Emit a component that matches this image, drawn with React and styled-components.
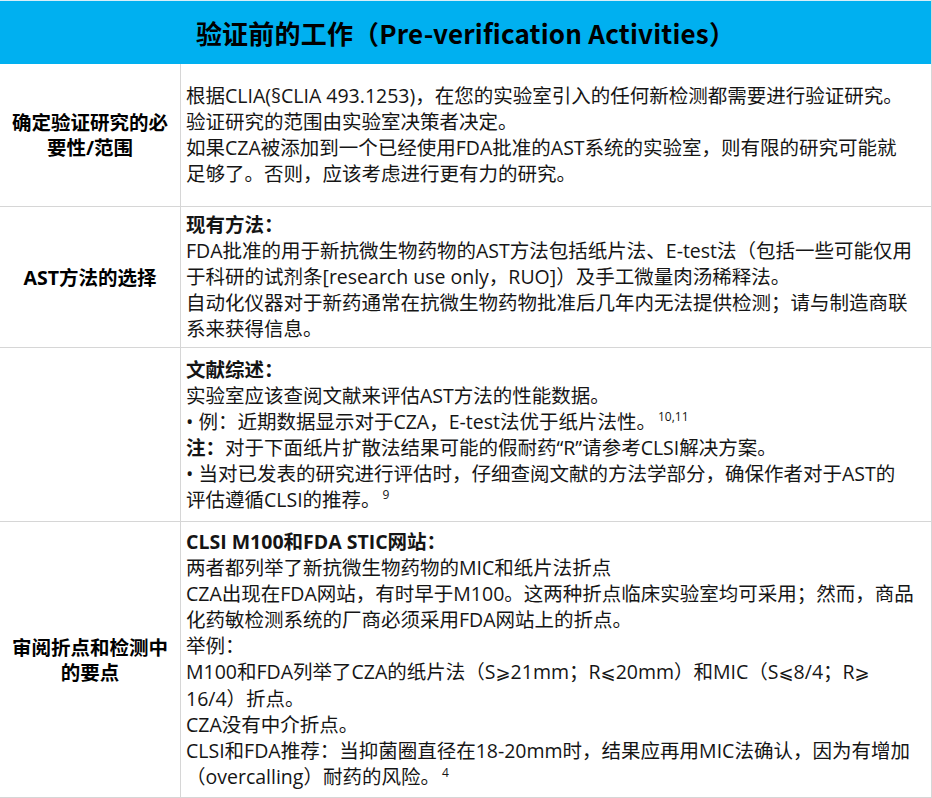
import React from 'react';
import styled, { createGlobalStyle } from 'styled-components';

const GlobalStyle = createGlobalStyle`
  html, body {
    margin: 0;
    padding: 0;
    background: #ffffff;
  }
`;

const Table = styled.main`
  width: 932px;
  box-sizing: border-box;
  border-right: 1px solid #d6d6d6;
  border-bottom: 1px solid #d6d6d6;
  font-family: 'Open Sans', 'Noto Sans CJK SC', sans-serif;
  color: #151515;
`;

const Header = styled.header`
  height: 64px;
  box-sizing: border-box;
  border-top: 1px solid #d6eef9;
  background: #00b0f0;
  display: flex;
  align-items: center;
  justify-content: center;
`;

const Title = styled.h1`
  margin: 0;
  font-family: 'Noto Sans CJK SC', sans-serif;
  font-size: 26px;
  font-weight: 700;
  color: #000;
  letter-spacing: 0.2px;
`;

const Row = styled.section`
  display: grid;
  grid-template-columns: 181px 1fr;
  height: ${(p) => p.$height}px;
  box-sizing: border-box;
  border-bottom: ${(p) => (p.$last ? 'none' : '1px solid #d6d6d6')};
`;

const Label = styled.div`
  border-right: 1px solid #d6d6d6;
  display: flex;
  align-items: center;
  justify-content: center;
  text-align: center;
  padding: 0 8px;
  font-size: 19.5px;
  line-height: 25px;
  font-weight: 700;
  color: #000;
`;

const Body = styled.div`
  display: flex;
  flex-direction: column;
  justify-content: center;
  padding: 0 0 0 5px;
  font-size: 19.5px;
  line-height: 26px;
  overflow: hidden;
`;

const Line = styled.div`
  white-space: nowrap;
  font-weight: ${(p) => (p.$bold ? 700 : 400)};
`;

const Strong = styled.b`
  font-weight: 700;
`;

const Sym = styled.span`
  font-family: 'DejaVu Sans', 'Noto Sans CJK SC', sans-serif;
  font-size: 18px;
`;

const Sup = styled.sup`
  font-size: 12px;
  line-height: 0;
  vertical-align: 0.6em;
  margin-left: 2px;
`;

export default function App() {
  return (
    <>
      <GlobalStyle />
      <Table>
        <Header>
          <Title>验证前的工作（Pre-verification Activities）</Title>
        </Header>

        <Row $height={143}>
          <Label>确定验证研究的必要性/范围</Label>
          <Body>
            <Line>根据CLIA(§CLIA 493.1253)，在您的实验室引入的任何新检测都需要进行验证研究。</Line>
            <Line>验证研究的范围由实验室决策者决定。</Line>
            <Line>如果CZA被添加到一个已经使用FDA批准的AST系统的实验室，则有限的研究可能就</Line>
            <Line>足够了。否则，应该考虑进行更有力的研究。</Line>
          </Body>
        </Row>

        <Row $height={141}>
          <Label>AST方法的选择</Label>
          <Body>
            <Line $bold>现有方法：</Line>
            <Line>FDA批准的用于新抗微生物药物的AST方法包括纸片法、E-test法（包括一些可能仅用</Line>
            <Line>于科研的试剂条[research use only，RUO]）及手工微量肉汤稀释法。</Line>
            <Line>自动化仪器对于新药通常在抗微生物药物批准后几年内无法提供检测；请与制造商联</Line>
            <Line>系来获得信息。</Line>
          </Body>
        </Row>

        <Row $height={174}>
          <Label />
          <Body>
            <Line $bold>文献综述：</Line>
            <Line>实验室应该查阅文献来评估AST方法的性能数据。</Line>
            <Line>
              • 例：近期数据显示对于CZA，E-test法优于纸片法性。<Sup>10,11</Sup>
            </Line>
            <Line>
              <Strong>注：</Strong>对于下面纸片扩散法结果可能的假耐药“R”请参考CLSI解决方案。
            </Line>
            <Line>• 当对已发表的研究进行评估时，仔细查阅文献的方法学部分，确保作者对于AST的</Line>
            <Line>
              评估遵循CLSI的推荐。<Sup>9</Sup>
            </Line>
          </Body>
        </Row>

        <Row $height={275} $last>
          <Label>审阅折点和检测中的要点</Label>
          <Body>
            <Line $bold>CLSI M100和FDA STIC网站：</Line>
            <Line>两者都列举了新抗微生物药物的MIC和纸片法折点</Line>
            <Line>CZA出现在FDA网站，有时早于M100。这两种折点临床实验室均可采用；然而，商品</Line>
            <Line>化药敏检测系统的厂商必须采用FDA网站上的折点。</Line>
            <Line>举例：</Line>
            <Line>
              M100和FDA列举了CZA的纸片法（S<Sym>⩾</Sym>21mm；R<Sym>⩽</Sym>20mm）和MIC（S<Sym>⩽</Sym>8/4；R<Sym>⩾</Sym>
            </Line>
            <Line>16/4）折点。</Line>
            <Line>CZA没有中介折点。</Line>
            <Line>CLSI和FDA推荐：当抑菌圈直径在18-20mm时，结果应再用MIC法确认，因为有增加</Line>
            <Line>
              （overcalling）耐药的风险。<Sup>4</Sup>
            </Line>
          </Body>
        </Row>
      </Table>
    </>
  );
}
